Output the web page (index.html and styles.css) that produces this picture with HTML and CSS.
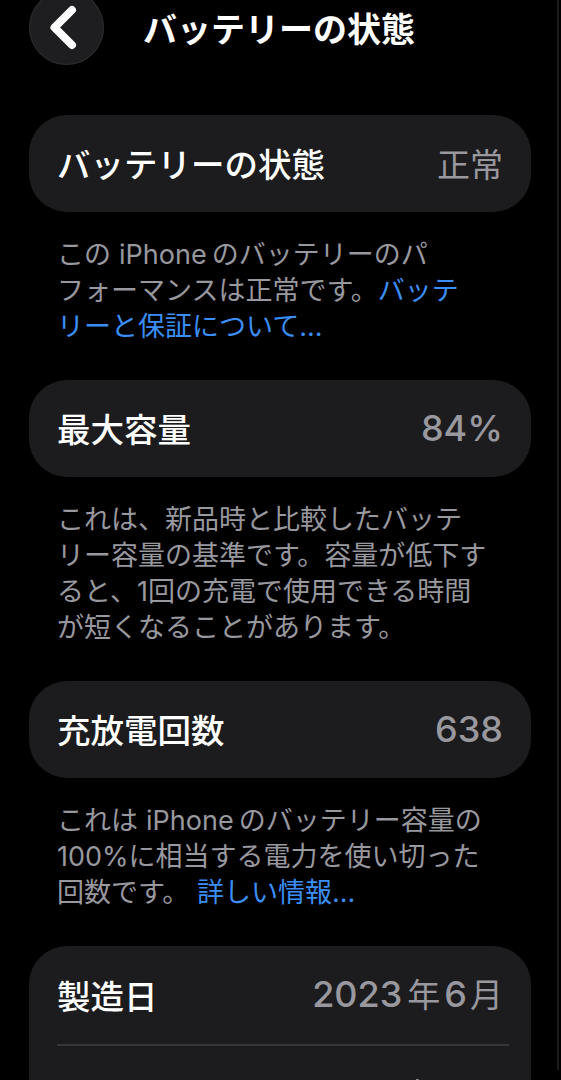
FILE: index.html
```html
<!DOCTYPE html>
<html lang="ja">
<head>
<meta charset="utf-8">
<title>バッテリーの状態</title>
<link rel="stylesheet" href="styles.css">
</head>
<body>
<div class="screen">
  <header class="nav">
    <div class="back">
      <svg width="75" height="75" viewBox="0 0 75 75" aria-hidden="true">
        <path d="M43 20 L25.5 37.5 L43 55" fill="none" stroke="#ffffff" stroke-width="8" stroke-linecap="round" stroke-linejoin="round"/>
      </svg>
    </div>
    <h1 class="title">バッテリーの状態</h1>
  </header>

  <section class="card">
    <div class="cell">
      <span class="label">バッテリーの状態</span>
      <span class="value">正常</span>
    </div>
  </section>
  <p class="footer">この<span class="lat">iPhone</span>のバッテリーのパ<br>フォーマンスは正常です。<a class="link">バッテ<br>リーと保証について...</a></p>

  <section class="card">
    <div class="cell">
      <span class="label">最大容量</span>
      <span class="value num">84%</span>
    </div>
  </section>
  <p class="footer">これは、新品時と比較したバッテ<br>リー容量の基準です。容量が低下す<br>ると、1回の充電で使用できる時間<br>が短くなることがあります。</p>

  <section class="card">
    <div class="cell">
      <span class="label">充放電回数</span>
      <span class="value num">638</span>
    </div>
  </section>
  <p class="footer">これは<span class="lat">iPhone</span>のバッテリー容量の<br>100%に相当する電力を使い切った<br>回数です。 <a class="link">詳しい情報...</a></p>

  <section class="card card-multi">
    <div class="cell">
      <span class="label">製造日</span>
      <span class="value num">2023<span class="cjk">年</span>6<span class="cjk">月</span></span>
    </div>
    <div class="sep"></div>
    <div class="cell">
      <span class="label">初回使用日</span>
      <span class="value num">2023<span class="cjk">年</span>9<span class="cjk">月</span></span>
    </div>
  </section>
</div>
</body>
</html>
```

FILE: styles.css
```css
html, body {
  margin: 0;
  padding: 0;
  background: #000000;
}

body {
  width: 561px;
  height: 1080px;
  overflow: hidden;
  font-family: "Inter", "Noto Sans CJK JP", sans-serif;
  color: #ffffff;
}

.screen {
  width: 559px;
  height: 1080px;
  border-right: 2px solid #1b1b1c;
  padding: 0 0 0 29px;
  box-sizing: border-box;
}

.screen > .card,
.screen > .footer {
  width: 502px;
}

.nav {
  display: flex;
  align-items: center;
  gap: 39px;
  height: 75px;
  margin-top: -10px;
}

.back {
  width: 75px;
  height: 75px;
  flex: none;
  border-radius: 50%;
  background: #1e1e20;
  box-shadow: inset 0 0 0 1px #2c2c2e;
  display: flex;
  align-items: center;
  justify-content: center;
}

.back svg {
  display: block;
}

.title {
  margin: 0;
  padding-top: 2px;
  font-family: "Noto Sans CJK JP", sans-serif;
  font-size: 34px;
  line-height: 1.2;
  font-weight: 700;
  color: #ffffff;
}

.card {
  background: #1c1c1e;
  border-radius: 38px;
}

.nav + .card {
  margin-top: 50px;
}

.cell {
  display: flex;
  align-items: center;
  justify-content: space-between;
  height: 97px;
  padding: 0 28px;
  line-height: 1.2;
}

.card-multi .cell {
  height: 98px;
}

.label {
  font-family: "Noto Sans CJK JP", sans-serif;
  font-size: 33.5px;
  font-weight: 500;
  color: #ffffff;
}

.value {
  font-family: "Noto Sans CJK JP", sans-serif;
  font-size: 33px;
  font-weight: 400;
  color: #98989e;
}

.value.num {
  font-family: "Inter", "Noto Sans CJK JP", sans-serif;
  font-size: 36px;
  font-weight: 500;
}

.value .cjk {
  font-family: "Noto Sans CJK JP", sans-serif;
  font-size: 33px;
  font-weight: 400;
  margin: 0 4px 0 5px;
}

.value .cjk:last-child {
  margin: 0 0 0 3px;
}

.footer {
  margin: 25px 0 35px;
  padding: 0 28px;
  font-family: "Inter", "Noto Sans CJK JP", sans-serif;
  font-size: 27px;
  line-height: 36px;
  color: #98989f;
}

.lat {
  margin: 0 5px 0 8px;
}

.link {
  color: #3a8ef6;
}

.sep {
  height: 2px;
  background: #353537;
  margin: 0 22px 0 28px;
}
```
